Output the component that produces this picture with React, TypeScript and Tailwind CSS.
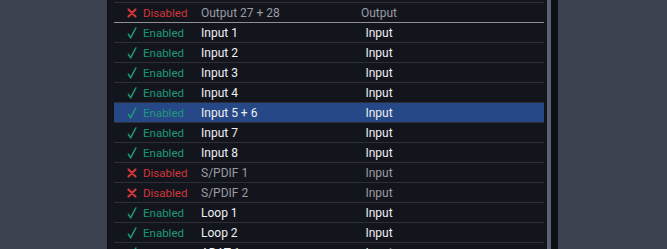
type Channel = {
  name: string;
  kind: 'Input' | 'Output';
  enabled: boolean;
  selected?: boolean;
  divider?: boolean;
};

const channels: Channel[] = [
  { name: 'Output 25 + 26', kind: 'Output', enabled: false },
  { name: 'Output 27 + 28', kind: 'Output', enabled: false, divider: true },
  { name: 'Input 1', kind: 'Input', enabled: true },
  { name: 'Input 2', kind: 'Input', enabled: true },
  { name: 'Input 3', kind: 'Input', enabled: true },
  { name: 'Input 4', kind: 'Input', enabled: true },
  { name: 'Input 5 + 6', kind: 'Input', enabled: true, selected: true },
  { name: 'Input 7', kind: 'Input', enabled: true },
  { name: 'Input 8', kind: 'Input', enabled: true },
  { name: 'S/PDIF 1', kind: 'Input', enabled: false },
  { name: 'S/PDIF 2', kind: 'Input', enabled: false },
  { name: 'Loop 1', kind: 'Input', enabled: true },
  { name: 'Loop 2', kind: 'Input', enabled: true },
  { name: 'ADAT 1', kind: 'Input', enabled: true },
];

function Check() {
  return (
    <svg width="10" height="12" viewBox="0 0 10 12" fill="none">
      <path d="M1.4 7.4 L3.6 10.8 L8.8 1" stroke="#1d9877" strokeWidth="1.6" strokeLinecap="round" strokeLinejoin="round" />
    </svg>
  );
}

function Cross() {
  return (
    <svg width="10" height="10" viewBox="0 0 10 10" fill="none">
      <path d="M1.5 1.5 L8.5 8.5 M8.5 1.5 L1.5 8.5" stroke="#d2363b" strokeWidth="2.2" strokeLinecap="round" />
    </svg>
  );
}

function Row({ ch }: { ch: Channel }) {
  const border = ch.divider ? 'border-[#8e9096]' : 'border-[#2d2f37]';
  const bg = ch.selected ? 'bg-[#274886]' : '';
  const nameColor = ch.enabled ? 'text-[#eef0f4]' : 'text-[#9a9ca4]';
  return (
    <div className={`flex h-[20px] items-baseline border-b pt-[1px] ${border} ${bg}`}>
      <div className="flex w-[29px] self-center justify-end pr-[6px]">{ch.enabled ? <Check /> : <Cross />}</div>
      <div className={`w-[58px] text-[11.5px] leading-[18px] ${ch.enabled ? 'text-[#1d9877]' : 'text-[#d2363b]'}`}>
        {ch.enabled ? 'Enabled' : 'Disabled'}
      </div>
      <div className={`w-[129px] text-[12px] leading-[18px] ${nameColor}`}>{ch.name}</div>
      <div className={`w-[98px] text-center text-[12px] leading-[18px] ${nameColor}`}>{ch.kind}</div>
    </div>
  );
}

export default function App() {
  return (
    <div className="flex h-[249px] w-[667px] overflow-hidden bg-[#3c4250] font-['Roboto',sans-serif]">
      <div className="w-[107px] shrink-0" />
      <div className="flex w-[451px] shrink-0 border-l border-[#0d0f14] bg-[#13151d]">
        <div className="ml-[6px] w-[430px] overflow-hidden">
          <div className="-mt-[17px]">
            {channels.map(ch => (
              <Row key={ch.name} ch={ch} />
            ))}
          </div>
        </div>
        <div className="ml-[3px] w-[4px] bg-[#5b6170]" />
        <div className="flex-1 bg-[#0d0f14]" />
      </div>
    </div>
  );
}
